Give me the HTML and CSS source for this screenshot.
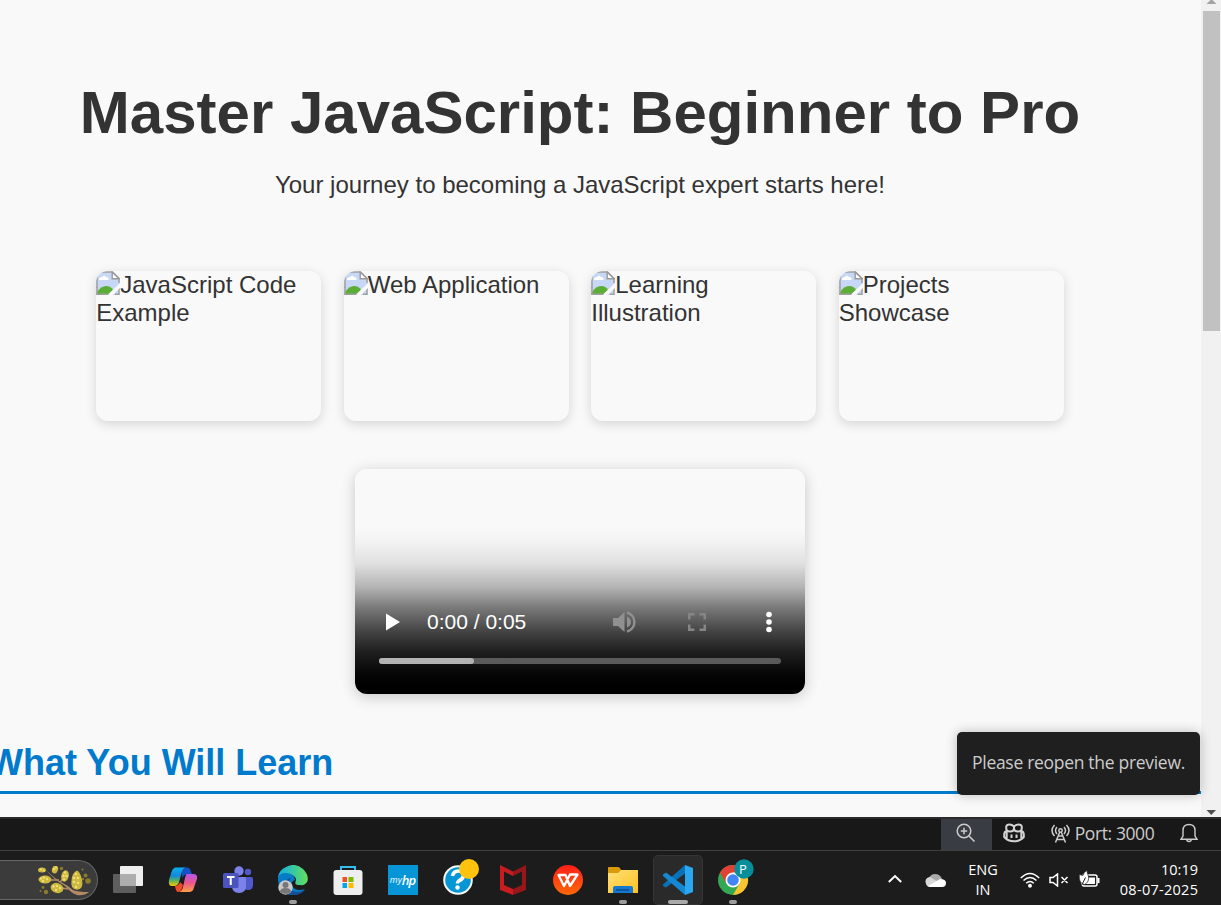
FILE: index.html
```html
<!DOCTYPE html>
<html lang="en">
<head>
<meta charset="utf-8">
<title>Master JavaScript</title>
<link rel="stylesheet" href="styles.css">
</head>
<body>
<svg width="0" height="0" class="defs" aria-hidden="true">
  <symbol id="broken" viewBox="0 0 24 24">
    <path d="M0 1h16.500l7 6.500V24H0z" fill="#c6d8f6"/>
    <path d="M1 17V1H16.500L23 7.500V12" fill="none" stroke="#a0a0a0" stroke-width="1.500"/>
    <path d="M16.200 1.200V7.800h7z" fill="#fff" stroke="#999" stroke-width="1.400"/>
    <path d="M3 9q0-3 3-3 2-3 4 0 3 0 2.500 3z" fill="#fff"/>
    <path d="M1 23v-2q4-6 9-6t7 4l-4 4z" fill="#5bae35"/>
    <path d="M0 23.300h13.500M1 16v7M23 15v8.300h-4" fill="none" stroke="#a0a0a0" stroke-width="1.500"/>
    <path d="M13.500 24.500 24.500 14" stroke="#f9f9f9" stroke-width="3.500"/>
  </symbol>
</svg>
<div class="screen">
  <div class="preview">
    <main class="content">
      <h1 class="title">Master JavaScript: Beginner to Pro</h1>
      <p class="tagline">Your journey to becoming a JavaScript expert starts here!</p>
      <div class="gallery">
        <div class="shot"><svg class="broken"><use href="#broken"/></svg>JavaScript Code Example</div>
        <div class="shot"><svg class="broken"><use href="#broken"/></svg>Web Application</div>
        <div class="shot"><svg class="broken"><use href="#broken"/></svg>Learning Illustration</div>
        <div class="shot"><svg class="broken"><use href="#broken"/></svg>Projects Showcase</div>
      </div>
      <div class="video">
        <div class="controls">
          <svg class="play" width="14" height="18" viewBox="0 0 14 18"><path d="M0 0.500 14 9 0 17.500z" fill="#fff"/></svg>
          <span class="time">0:00 / 0:05</span>
          <svg class="sound" width="24" height="22" viewBox="0 0 24 22"><path d="M0 7h5l6.500-6v20L5 15H0zM14 5.500q4 2 4 5.500t-4 5.500z" fill="#909090"/><path d="M14 1.500a9.800 9.800 0 0 1 0 19" fill="none" stroke="#909090" stroke-width="2.500"/></svg>
          <svg class="full" width="18" height="18" viewBox="0 0 18 18"><path d="M1.250 6.500V1.250H6.500M11.500 1.250h5.250V6.500M16.750 11.500v5.250H11.500M6.500 16.750H1.250V11.500" fill="none" stroke="#858585" stroke-width="2.500"/></svg>
          <svg class="more" width="6" height="22" viewBox="0 0 6 22"><g fill="#fff"><circle cx="3" cy="3.500" r="2.800"/><circle cx="3" cy="11" r="2.800"/><circle cx="3" cy="18.500" r="2.800"/></g></svg>
        </div>
        <div class="timeline"><div class="buffered"></div></div>
      </div>
      <h2 class="section-title">What You Will Learn</h2>
    </main>
    <div class="scrollbar">
      <svg class="arrow-up" width="20" height="11" viewBox="0 0 20 11"><path d="M5.500 4 10.500-1l5 5z" fill="#a3a3a3"/></svg>
      <div class="thumb"></div>
      <svg class="arrow-down" width="20" height="11" viewBox="0 0 20 11"><path d="M5.500 4h9.500l-4.750 5z" fill="#505050"/></svg>
    </div>
    <div class="toast">Please reopen the preview.</div>
  </div>

  <div class="statusbar">
    <div class="status-item zoom"><svg width="20" height="20" viewBox="0 0 20 20" fill="none" stroke="#ccc" stroke-width="1.500"><circle cx="8" cy="8" r="6.800"/><path d="M13 13l5.500 5.500M4.800 8h6.400M8 4.800v6.400"/></svg></div>
    <div class="status-item copilot"><svg width="22" height="20" viewBox="0 0 22 20" fill="none" stroke="#d2d2d2" stroke-width="2"><path d="M11 3.500Q8.500 1 5 1.700 3 2.200 3.200 5q0 3.500 3.800 3.500 4 0 4-3.500zM11 3.500Q13.500 1 17 1.700q2 .5 1.800 3.300 0 3.500-3.800 3.500-4 0-4-3.500z"/><path d="M3.500 8Q1.200 9 1.200 11v3Q5 18.300 11 18.300T20.800 14v-3q0-2-2.300-3M3.700 7.500V16M18.300 7.500V16M8.500 11.500V15M13.500 11.500V15"/></svg></div>
    <div class="status-item port"><svg width="19" height="19" viewBox="0 0 19 19" fill="none" stroke="#ccc" stroke-width="1.500"><circle cx="9.500" cy="6.500" r="1.700"/><path d="M8.800 8 4.500 18.500M10.200 8l4.300 10.500M7.300 12h4.400M5.800 15.500h7.400M6 3q-3 3.500 0 7M13 3q3 3.500 0 7M3.500 1q-5 5.500 0 11M15.500 1q5 5.500 0 11"/></svg><span class="port-text">Port: 3000</span></div>
    <div class="status-item bell"><svg width="18" height="20" viewBox="0 0 18 20" fill="none" stroke="#ccc" stroke-width="1.400"><path d="M3 13V7.500Q3 1.500 9 1.500t6 6V13l2 3.200H1zM6.800 16.500q0 2 2.200 2t2.200-2"/></svg></div>
  </div>

  <div class="taskbar">
    <div class="search">
      <svg width="54" height="34" viewBox="0 0 54 34">
        <path d="M8 4q8 8 15 12 6 3 12 8 5 2 16 2-5 4-12 3Q33 27 27 20 15 13 8 4z" fill="#b48a66"/>
        <path d="M12 14h9M22 16l5-5M24 22l6 1M39 24v-5" stroke="#b48a66" stroke-width="1.500"/>
        <g fill="#cdb940"><ellipse cx="4" cy="4" rx="4" ry="2.500"/><ellipse cx="17" cy="3.500" rx="3" ry="4" transform="rotate(20 17 3.500)"/><ellipse cx="7" cy="13.500" rx="6.500" ry="4"/><ellipse cx="27" cy="10" rx="3.700" ry="5.800" transform="rotate(15 27 10)"/><ellipse cx="19" cy="22" rx="6.500" ry="5" transform="rotate(15 19 22)"/><path d="M39 4.500q3 1 5 9 2 10-5 10t-5.500-9q.5-8 5.500-10z"/></g>
        <g fill="#efdf75"><circle cx="3" cy="3.300" r="1.100"/><circle cx="6" cy="4.500" r="1"/><circle cx="16" cy="3" r="1.200"/><circle cx="18" cy="1.500" r="1"/><circle cx="3" cy="12.500" r="1.200"/><circle cx="6" cy="11.500" r="1.200"/><circle cx="9" cy="13" r="1.200"/><circle cx="5" cy="15" r="1.200"/><circle cx="27" cy="6.500" r="1.200"/><circle cx="25.500" cy="10" r="1.200"/><circle cx="28.500" cy="10" r="1.200"/><circle cx="26" cy="13.500" r="1.200"/><circle cx="15.500" cy="20.500" r="1.200"/><circle cx="19" cy="20" r="1.200"/><circle cx="22" cy="22" r="1.200"/><circle cx="18" cy="24" r="1.200"/><circle cx="38" cy="8" r="1.200"/><circle cx="36" cy="12" r="1.300"/><circle cx="40" cy="12" r="1.300"/><circle cx="36" cy="16" r="1.300"/><circle cx="40" cy="17" r="1.300"/><circle cx="38" cy="21" r="1.300"/></g>
        <g fill="#8b7c2c"><circle cx="23.500" cy="2.500" r="1.700"/><circle cx="44.500" cy="3.500" r="1"/><circle cx="47.500" cy="9.500" r="2"/><circle cx="50" cy="15" r="2.800"/><circle cx="45" cy="13" r="1.200"/><circle cx="5" cy="21.500" r="1.400"/><circle cx="8" cy="26" r="2.200"/><circle cx="2.500" cy="25" r="1"/></g>
      </svg>
    </div>
    <div class="apps">
      <div class="app"><svg width="30" height="30" viewBox="0 0 30 30"><rect x="7" y="1" width="23" height="20" rx="1" fill="#eee"/><rect x="0" y="9" width="23" height="19" rx="1" fill="#5e5e5e"/><path d="M7 9h16v12H7z" fill="#adadad"/></svg></div>
      <div class="app"><svg width="30" height="30" viewBox="0 0 30 30"><defs><linearGradient id="cb" x1="0" y1="0" x2="0" y2="1"><stop stop-color="#0caff0"/><stop offset=".45" stop-color="#1189dc"/><stop offset=".7" stop-color="#57af62"/><stop offset="1" stop-color="#f7ca00"/></linearGradient><linearGradient id="cp" x1="0" y1="0" x2="0" y2="1"><stop stop-color="#b458eb"/><stop offset=".5" stop-color="#ed5589"/><stop offset="1" stop-color="#ff9f46"/></linearGradient></defs><path d="M14 2.500h5q3 0 4 4l1 3h-5q-4 0-5 4z" fill="#1752c3"/><path d="M8 2.500h10q-3 0-4 4L11 17q-1 4-5 4H4q-4 0-3-6L3.500 7Q5 2.500 8 2.500z" fill="url(#cb)"/><path d="M19 9h6q5 0 4 5l-3 8.500Q25 27 21 27H10q4 0 5-5l2-9q1-4 2-4z" fill="url(#cp)"/><path d="M7 21q4 0 5-4l3 3-1 3q-1 4-4 4-2 0-3-6z" fill="#f04b24"/></svg></div>
      <div class="app"><svg width="30" height="30" viewBox="0 0 30 30"><circle cx="25" cy="7" r="3.200" fill="#5059c9"/><path d="M19 12h9q2 0 2 2v6q0 5-5 5-4 0-6-4z" fill="#5059c9"/><circle cx="16" cy="6" r="4.700" fill="#7b83eb"/><path d="M9 12h13q1 0 1 1.500V21q0 7-7 7t-7-7z" fill="#7b83eb"/><rect x="0" y="8" width="15.500" height="15" rx="1.500" fill="#4b53bc"/><path d="M4 12h7.500M7.750 12v8" stroke="#fff" stroke-width="2"/></svg></div>
      <div class="app running"><svg width="30" height="30" viewBox="0 0 30 30"><defs><linearGradient id="eg"><stop stop-color="#0eafe9"/><stop offset="1" stop-color="#63df5b"/></linearGradient></defs><path d="M0 16Q-1 6 8 2q9-5 17 2 6 6 4.500 12-2 5-8 4-5 0-4-3 2-5-4-7T0 16z" fill="url(#eg)"/><path d="M0 13q1-5 8-5 8 0 9 7-5 2-3 6 4 6 13 3-6 7-14 6Q0 28 0 13z" fill="#087bc7"/><path d="M13 13q-4 5-1 10 4 7 15 2-6 6-14 5-6-2-7-8 0-8 7-9z" fill="#164e99"/><circle cx="7.500" cy="22.500" r="7.200" fill="#c9c9c9"/><circle cx="7.500" cy="20" r="3" fill="#77777a"/><path d="M2 27q0-4 5.500-4t5.500 4q-5 4-11 0z" fill="#77777a"/></svg></div>
      <div class="app"><svg width="30" height="30" viewBox="0 0 30 30"><path d="M8 6V2h14v4" fill="none" stroke="#38bdf1" stroke-width="2"/><rect x=".5" y="5" width="29" height="25" rx="3" fill="#eee"/><path d="M9.500 12H14v5H9.500z" fill="#f25022"/><path d="M15.500 12h5v5h-5z" fill="#7fba00"/><path d="M9.500 18H14v5H9.500z" fill="#00a4ef"/><path d="M15.500 18h5v5h-5z" fill="#ffb900"/></svg></div>
      <div class="app"><div class="hp"><span class="my">my</span><span class="hp-mark">hp</span></div></div>
      <div class="app"><svg class="help" width="38" height="38" viewBox="0 0 38 38"><circle cx="15" cy="21" r="13.800" fill="#0796d5" stroke="#f6f6f6" stroke-width="2"/><path d="M9.500 17q1-5 6-5t5 4-4 5.500q-2 1-2 3" fill="none" stroke="#fff" stroke-width="3.600"/><circle cx="14.500" cy="28.500" r="2.200" fill="#fff"/><circle cx="26" cy="10" r="10" fill="#ffc20d"/></svg></div>
      <div class="app"><svg width="26" height="30" viewBox="0 0 26 30"><path d="M0 0 13 6.500V11L4 6.500V20l9 4v6L0 25z" fill="#c71d20"/><path d="M26 0 13 6.500V11l9-4.500V20l-9 4v6l13-5z" fill="#951719"/></svg></div>
      <div class="app"><svg width="30" height="30" viewBox="0 0 30 30"><defs><linearGradient id="wps" x1="0" y1="0" x2="0" y2="1"><stop stop-color="#ff1e18"/><stop offset="1" stop-color="#ff6808"/></linearGradient></defs><circle cx="15" cy="15" r="15" fill="url(#wps)"/><path d="M5.500 10h7l4.500 11 7.500-11.500H17L11 21z" fill="none" stroke="#fff" stroke-width="2.300" stroke-linejoin="round"/></svg></div>
      <div class="app running"><svg width="30" height="30" viewBox="0 0 30 30"><defs><linearGradient id="folder" x1="0" y1="0" x2="1" y2="1"><stop stop-color="#ffe078"/><stop offset="1" stop-color="#ffc021"/></linearGradient></defs><path d="M0 3q0-1 1-1h9q2 0 3 3H30v9H0z" fill="#d99c07"/><path d="M0 8h10l3-3h17v23H0z" fill="url(#folder)"/><path d="M5 28v-5q0-2 2-2h16q2 0 2 2v5z" fill="#1478d0"/><path d="M8 25h13" stroke="#0a4d91" stroke-width="1.500"/></svg></div>
      <div class="app active running"><svg width="30" height="30" viewBox="0 0 30 30"><path d="M0 19.500 22 0v8.500L3 22.500 0 21z" fill="#0872b9"/><path d="M0 9.500 3 7.500 22 21.500V30L0 11z" fill="#1688d1"/><path d="m22 0 8 3v24l-8 3z" fill="#29a7f2"/></svg></div>
      <div class="app running chrome"><svg width="38" height="38" viewBox="0 0 38 38"><circle cx="15" cy="21" r="15" fill="#34a853"/><path d="M2 13.500A15 15 0 0 1 28 13.500H15L8.500 25z" fill="#e14235"/><path d="M28 13.500A15 15 0 0 1 15 36l6.500-11.300L15 13.500z" fill="#fbc42e"/><circle cx="15" cy="21" r="7.500" fill="#fff"/><circle cx="15" cy="21" r="5.800" fill="#4285f4"/><circle cx="26" cy="10" r="9.700" fill="#078e9b"/></svg><span class="profile">P</span></div>
    </div>
    <div class="tray">
      <svg class="chevron" width="14" height="9" viewBox="0 0 14 9"><path d="m.8 8 6.200-6 6.200 6" fill="none" stroke="#fff" stroke-width="1.900"/></svg>
      <svg class="cloud" width="21" height="14" viewBox="0 0 21 14"><path d="M4 5q2-4 6-4 5 0 7 5l-7 4z" fill="#aaa"/><path d="M1 11q-2-6 4-7l13 8-2 2H5q-3 0-4-3z" fill="#d8d8d8"/><path d="M3 13 15 6q6 0 6 4 0 4-4 4H5z" fill="#fff"/></svg>
      <div class="lang">ENG<br>IN</div>
      <svg class="wifi" width="20" height="16" viewBox="0 0 20 16" fill="none" stroke="#fff" stroke-width="1.500"><path d="M.8 6Q10-3 19.200 6M3.500 8.500q6.500-6 13 0M6.200 11.200q3.800-3.500 7.600 0"/><circle cx="10" cy="13.700" r="1.200" fill="#fff"/></svg>
      <svg class="mute" width="20" height="14" viewBox="0 0 20 14" fill="none" stroke="#fff" stroke-width="1.500"><path d="M1 4.500h3L8.500 1v12L4 9.500H1zM12.500 4l6 6M18.500 4l-6 6"/></svg>
      <svg class="battery" width="21" height="18" viewBox="0 0 21 18"><rect x="3" y="5" width="15" height="11" rx="2" fill="none" stroke="#fff" stroke-width="1.500"/><path d="M5 7.500h11v6.500H5zM18.500 8h2v5h-2z" fill="#fff"/><path d="M.3 4.500 4 5.500Q4.500 2 8 .5q0 3 1.500 5.500 1 6-4 8.500-6-1-5.200-10z" fill="#fff" stroke="#1c1c1c" stroke-width=".7"/><path d="m2.500 15.500 4-8" stroke="#1c1c1c"/></svg>
      <div class="clock"><span class="hour">10:19</span><br><span class="date">08-07-2025</span></div>
    </div>
  </div>
</div>
</body>
</html>
```
FILE: styles.css
```css
* { box-sizing: border-box; }
body { margin: 0; }
svg { display: block; flex: none; }
.defs { position: absolute; }
.screen { width: 1221px; height: 905px; overflow: hidden; display: flex; flex-direction: column; background: #1c1c1c; font-family: "Open Sans", sans-serif; }
.preview { position: relative; height: 817px; flex: none; display: flex; overflow: hidden; background: #f9f9f9; color: #333; font: 24px/28px "Liberation Sans", Arial, sans-serif; }
.content { width: 1201px; padding: 79px 41px 0 0; overflow: hidden; }
.title { margin: 0; text-align: center; white-space: nowrap; font-size: 60px; line-height: 68px; }
.tagline { margin: 24px 0 72px; text-align: center; line-height: 28px; }
.gallery { display: flex; justify-content: center; gap: 22.5px; }
.shot { width: 225px; height: 150px; border-radius: 12px; overflow: hidden; box-shadow: 0 3px 12px rgba(0,0,0,.15); font-size: 24px; line-height: 28px; }
.broken { display: inline-block; width: 24px; height: 24px; vertical-align: -2px; }
.video { width: 450px; height: 225px; margin: 48px auto 0; padding: 141px 24px 0; border-radius: 12px; box-shadow: 0 3px 15px rgba(0,0,0,.2); background: linear-gradient(to bottom, #f9f9f9 0 58px, #f2f2f2 74px, #e1e1e1 94px, #b4b4b4 118px, #767676 140px, #494949 160px, #202020 182px, #050505 206px, #000 216px); }
.controls { display: flex; align-items: center; height: 24px; padding: 0 9px 0 7px; }
.time { width: 185px; padding-left: 27px; color: #fff; font-size: 21px; white-space: nowrap; }
.sound { margin-left: 28px; }
.full { margin-left: 51px; }
.more { margin-left: auto; }
.timeline { height: 6px; margin-top: 24px; border-radius: 3px; background: #5a5a5a; }
.buffered { width: 95px; height: 6px; border-radius: 3px; background: #b3b3b3; }
.section-title { margin: 47px 0 0 -11px; width: 1240px; padding-bottom: 6px; border-bottom: 3px solid #007acc; color: #007acc; font-size: 36px; line-height: 44px; white-space: nowrap; }
.scrollbar { width: 20px; display: flex; flex-direction: column; align-items: center; background: #f1f1f1; }
.thumb { width: 17px; height: 320px; margin-left: 1px; background: #c1c1c1; }
.arrow-down { margin-top: auto; }
.toast { position: absolute; left: 957px; top: 732px; width: 243px; height: 63px; border-radius: 5px; background: #1f1f1f; color: #ccc; box-shadow: 0 0 12px rgba(0,0,0,.25); font: 17.5px/60px "Open Sans", sans-serif; letter-spacing: -.3px; text-align: center; white-space: nowrap; }
.statusbar { height: 34px; flex: none; display: flex; justify-content: flex-end; border-top: 2px solid #2b2b2b; border-bottom: 1px solid #404040; background: #181818; color: #ccc; }
.status-item { display: flex; align-items: center; justify-content: center; height: 31px; padding-bottom: 3px; }
.zoom { width: 51px; padding-right: 2px; background: #393d43; }
.copilot { width: 44px; }
.port { width: 133px; gap: 5px; }
.port-text { font-size: 17.5px; letter-spacing: -.4px; white-space: nowrap; }
.bell { width: 40px; margin-right: 12px; }
.taskbar { height: 54px; flex: none; display: flex; align-items: flex-start; background: #1c1c1c; }
.search { width: 98px; height: 40px; margin-top: 9px; padding: 5px 0 0 38px; border: 1px solid #666; border-left: 0; border-radius: 0 20px 20px 0; background: #3b3b3b; }
.apps { display: flex; margin-left: 2px; }
.app { position: relative; width: 55px; height: 54px; padding-top: 14px; display: flex; justify-content: center; align-items: flex-start; }
.app.running::after { content: ""; position: absolute; bottom: 1px; left: 50%; width: 8px; height: 4px; margin-left: -4px; border-radius: 2px; background: #9d9d9d; }
.app.active::before { content: ""; position: absolute; inset: 4px 2px 0 3px; border: 1px solid #353535; border-radius: 5px; background: #2a2a2a; }
.app.active svg { position: relative; }
.app.active::after { width: 20px; margin-left: -10px; background: #aaa; }
.help, .chrome svg { margin: -6px -8px 0 0; }
.profile { position: absolute; left: 28px; top: 8px; width: 30px; padding-right: 10px; text-align: center; color: #fff; font-size: 13px; line-height: 20px; }
.hp { width: 30px; height: 30px; display: flex; align-items: center; justify-content: center; background: #0696d7; color: #fff; font-style: italic; line-height: 30px; }
.my { font-size: 9px; }
.hp-mark { font-size: 13px; font-weight: 600; letter-spacing: -1px; }
.tray { display: flex; align-items: center; height: 58px; margin-left: auto; padding-right: 23px; color: #fff; font-size: 14.500px; line-height: 20px; }
.chevron { margin-top: -3px; }
.cloud { margin: -1px 0 0 23px; }
.lang { width: 40px; margin-left: 17px; text-align: center; }
.wifi { margin-left: 17px; }
.mute { margin-left: 9px; }
.battery { margin: -2px 0 0 10px; }
.clock { width: 98px; text-align: right; white-space: nowrap; }
.date { letter-spacing: .28px; margin-right: -.28px; }
```
